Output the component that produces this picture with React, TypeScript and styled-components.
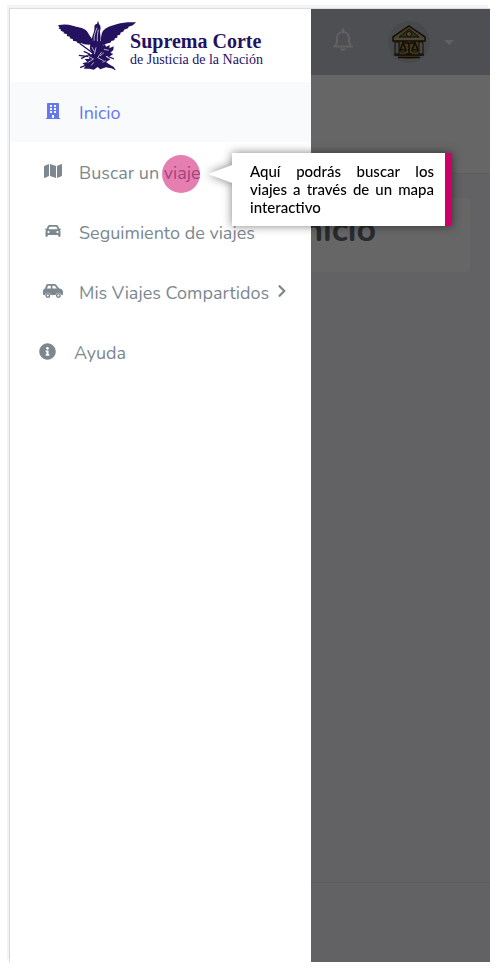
import React from "react";
import styled, { createGlobalStyle } from "styled-components";
import { FaBuilding, FaMap, FaCar, FaInfoCircle, FaChevronRight } from "react-icons/fa";

const GlobalStyle = createGlobalStyle`
  * { box-sizing: border-box; }
  body { margin: 0; background: #fff; font-family: "Nunito", "Lato", sans-serif; }
`;

const Page = styled.div`
  min-height: 100vh;
  padding: 8px 7px 8px 9px;
  display: flex;
`;

const Frame = styled.div`
  position: relative;
  flex: 1;
  min-width: 0;
  display: flex;
  flex-direction: column;
  background: #f5f6f9;
  border-top: 1px solid #dcdde0;
  border-left: 1px solid #d8d8da;
  box-shadow: -2px -3px 0 #f2f3f3;
`;

const TopBar = styled.header`
  height: 66px;
  display: flex;
  align-items: center;
  justify-content: flex-end;
  padding-right: 36px;
  background: #c3c5cf;
`;

const IconButton = styled.button`
  border: 0;
  padding: 0;
  background: none;
  display: flex;
  align-items: center;
  gap: 14px;
  color: #f2f2f5;
`;

const BellButton = styled(IconButton)`
  margin: 0 34px 4px 0;
`;

const Avatar = styled.span`
  width: 42px;
  height: 42px;
  border-radius: 50%;
  background: #b5b6bc;
  display: grid;
  place-items: center;
`;

const Hero = styled.div`
  height: 99px;
  background: #fff;
  border-bottom: 1px solid #ebecef;
`;

const Content = styled.main`
  flex: 1;
  padding: 24px 20px;
`;

const Card = styled.section`
  min-height: 74px;
  padding: 10px 94px 20px 20px;
  border-radius: 4px;
  background: #fff;
`;

const Title = styled.h1`
  margin: 0;
  color: #5f6b76;
  font-size: 34px;
  line-height: 44px;
  font-weight: 700;
  text-align: right;
`;

const Footer = styled.footer`
  height: 80px;
  border-top: 1px solid #e8e9ed;
`;

const Scrim = styled.div`
  position: absolute;
  inset: 0;
  background: rgba(0, 0, 0, 0.6);
`;

const Drawer = styled.aside`
  position: absolute;
  top: 0;
  bottom: 0;
  left: 0;
  width: 301px;
  background: #fff;
`;

const Brand = styled.a`
  height: 73px;
  padding: 0 48px;
  display: flex;
  align-items: center;
  color: #24125f;
  text-decoration: none;
  font-family: "Liberation Serif", serif;
`;

const BrandText = styled.span`
  display: flex;
  flex-direction: column;
  margin: 8px 0 0 -8px;
  white-space: nowrap;
`;

const BrandName = styled.strong`
  font-size: 20px;
  line-height: 20px;
`;

const BrandSub = styled.span`
  font-size: 14px;
  line-height: 18px;
`;

const Menu = styled.ul`
  list-style: none;
  margin: 0;
  padding: 0;
`;

const MenuItem = styled.li`
  position: relative;
`;

const MenuLink = styled.a<{ $active?: boolean; $outdent?: boolean }>`
  height: 60px;
  padding-left: ${(p) => (p.$outdent ? 27 : 32)}px;
  display: flex;
  align-items: center;
  gap: 16px;
  color: ${(p) => (p.$active ? "#6777ef" : "#7c8790")};
  background: ${(p) => (p.$active ? "#f8fafc" : "transparent")};
  font-size: 18px;
  line-height: 24px;
  text-decoration: none;
  white-space: nowrap;
`;

const MenuIcon = styled.span`
  width: 21px;
  display: flex;
  justify-content: center;
  padding-bottom: 2px;
`;

const MenuLabel = styled.span`
  padding-top: 2px;
`;

const Chevron = styled(FaChevronRight)`
  margin: 0 0 2px -10px;
`;

const Highlight = styled.span`
  position: absolute;
  left: 152px;
  top: 13px;
  width: 38px;
  height: 38px;
  border-radius: 50%;
  background: rgba(204, 0, 102, 0.5);
  pointer-events: none;
`;

const Hint = styled.div`
  position: absolute;
  z-index: 1;
  left: 222px;
  top: 11px;
  width: 220px;
  padding: 9px 11px 10px 18px;
  border-right: 7px solid #cc0066;
  background: #fff;
  color: #000;
  filter: drop-shadow(0 0 5px rgba(0, 0, 0, 0.5));
  font-family: "Lato", sans-serif;
  font-size: 15px;
  line-height: 18px;
  font-weight: 500;
  text-align: justify;

  &::before {
    content: "";
    position: absolute;
    right: 100%;
    top: 12px;
    border: solid transparent;
    border-width: 9px 24px 9px 0;
    border-right-color: #fff;
  }
`;

const Eagle = () => (
  <svg width="82" height="52" viewBox="174 64 246 156" preserveAspectRatio="none" fill="#24125f" aria-hidden="true">
    <path d="M174 80c14-3 31-3 45 1 15 5 27 4 39 12 9 6 11 18 19 25l7 17-15 3-15-1-9-4-10 1-5-6-9-1-2-6-9-2 1-5-10-2 1-5-11-3 1-4-10-4 2-3-9-4 4-2z" />
    <path d="M414 71c-22-1-41 0-60 6-18 5-32 9-42 20-5 7-5 19-7 29l-7 11 15 2 14-5 8-2 3-5 9-2 2-6 7-2 1-7 8-2 1-6 10-4 1-5 12-4 2-5 13-4z" />
    <path d="M297 66l3 10c7 7 5 14 3 22l2 20-4 24h-17l-6-20c1-13 9-23 8-34-1-8 2-12 8-13z" />
    <path d="M294 87c-5 14-10 22-9 39M298 93c-2 10-4 22-3 35" stroke="#fff" strokeWidth="2" fill="none" />
    <path d="M273 136l32-3 12 10-2 15 14 7-8 9 14 8-14 9 12 7 14 8-2 4-24-4-17 6-8-7-12 8-14-3-17 0 6-9-10-7 15-4-8-9 15-1-5-12 14-2-8-14z" />
    <path d="M310 148l7-12 5 8 11-5-1 10 13-6-1 11-9 8 9 4-14 9-9-4-14 11-3-13 8-12z" />
    <path d="M240 134l110 79M329 174l17 7M245 180l28-14M238 170l30 4M242 207l31-13M253 158l18 8" stroke="#24125f" strokeWidth="4" fill="none" />
    <path d="M278 145l8 14M291 146l-5 20M308 160l-12 17 18 9M265 171l18 10-18 11M315 152l15 3M276 200l8-9M303 172l12-10M321 186l-10 5" stroke="#fff" strokeWidth="2" fill="none" />
  </svg>
);

const Bell = () => (
  <svg width="22" height="24" viewBox="0 0 22 24" fill="none" aria-hidden="true">
    <path d="M2 18.500h18M4 18v-2l1-1.500V10c0-3.500 2.500-6 6-6s6 2.500 6 6v4.500l1 1.500v2" stroke="currentColor" strokeWidth="2" strokeLinecap="round" strokeLinejoin="round" />
    <path d="M11 1.500V4" stroke="currentColor" strokeWidth="2.500" strokeLinecap="round" />
    <path d="M8 20.500h6c-.4 1.500-1.500 2.500-3 2.500s-2.600-1-3-2.500z" fill="currentColor" />
  </svg>
);

const Courthouse = () => (
  <svg width="34" height="34" viewBox="0 0 34 34" aria-hidden="true">
    <path d="M4 15h26v14c-4 4-8 5-13 5s-10-1-13-5z" fill="#a88943" />
    <path d="M17 1L33 12v4H1v-4z" fill="#b8a468" stroke="#26211d" strokeWidth="1.500" />
    <path d="M17 4l10 8H7z" fill="#8d7640" stroke="#26211d" />
    <circle cx="17" cy="9" r="2.500" fill="#c9b878" stroke="#26211d" />
    <path d="M2 14h30" stroke="#c8bfa8" strokeWidth="1" />
    <path d="M3 17h4v12H3zM27 17h4v12h-4z" fill="#b5b2ac" stroke="#26211d" />
    <path d="M2 30h30M6 32.500h22" stroke="#26211d" strokeWidth="1.500" />
    <path d="M17 16v13M10 18h14M11 18l-3 7h6zM23 18l-3 7h6zM14 29h6" fill="none" stroke="#26211d" strokeWidth="1.500" />
    <path d="M8 25h6l-1 2H9zM20 25h6l-1 2h-4z" fill="#c9a53e" stroke="#26211d" />
    <circle cx="17" cy="16.500" r="1.500" fill="#a52e2e" />
  </svg>
);

const Caret = () => (
  <svg width="10" height="5" viewBox="0 0 10 5" fill="currentColor" aria-hidden="true">
    <path d="M0 0h10L5 5z" />
  </svg>
);

const CompactCar = () => (
  <svg width="16" height="13" viewBox="0 0 16 13" fill="currentColor" aria-hidden="true">
    <path fillRule="evenodd" d="M5 0h6c1.200 0 2.100.6 2.500 1.700l.8 2.100.4-.2c.6-.2 1.100 0 1.200.5.1.4-.1.800-.6 1l-.4.200c.4.500.6 1 .6 1.700v3.800c0 .7-.4 1.200-1.100 1.200s-1.200-.5-1.200-1.200V10H2.800v.8c0 .7-.5 1.200-1.200 1.200S.5 11.500.5 10.800V7c0-.7.2-1.200.6-1.700l-.4-.2c-.5-.2-.7-.6-.6-1 .1-.5.6-.7 1.200-.5l.4.200.8-2.100C2.900.6 3.800 0 5 0zm.2 1.800c-.5 0-.8.200-1 .6l-.7 1.900h9l-.7-1.900c-.2-.4-.5-.6-1-.6zM3.500 6a1.100 1.100 0 1 0 0 2.200 1.100 1.100 0 0 0 0-2.200zm9 0a1.100 1.100 0 1 0 0 2.200 1.100 1.100 0 0 0 0-2.200z" />
  </svg>
);

const FamilyCar = () => (
  <svg width="20" height="14" viewBox="0 0 20 14" fill="currentColor" aria-hidden="true">
    <path fillRule="evenodd" d="M5 0h6.500c.8 0 1.400.3 1.900.9L16.200 4.600c2.300.2 3.800 1.600 3.800 3.500V10c0 .6-.4 1-1 1h-.7a3 3 0 0 0-5.800 0h-4.800a3 3 0 0 0-5.800 0H1c-.6 0-1-.4-1-1V7c0-1.200.7-2 1.800-2.300L3.200 1.200C3.500.4 4.100 0 5 0zm.1 1.700L4 4.600h3.800V1.700zm4.300 0v2.900h4.500l-2-2.500c-.2-.3-.5-.4-.9-.4z" />
    <path fillRule="evenodd" d="M4.800 9a2.500 2.500 0 1 1 0 5 2.500 2.500 0 0 1 0-5zm0 1.500a1 1 0 1 0 0 2 1 1 0 0 0 0-2zM15.400 9a2.500 2.500 0 1 1 0 5 2.500 2.500 0 0 1 0-5zm0 1.500a1 1 0 1 0 0 2 1 1 0 0 0 0-2z" />
  </svg>
);

export default function App() {
  return (
    <>
      <GlobalStyle />
      <Page>
        <Frame>
          <TopBar>
            <BellButton type="button" aria-label="Notificaciones">
              <Bell />
            </BellButton>
            <IconButton type="button" aria-label="Cuenta">
              <Avatar>
                <Courthouse />
              </Avatar>
              <Caret />
            </IconButton>
          </TopBar>
          <Hero />
          <Content>
            <Card>
              <Title>Inicio</Title>
            </Card>
          </Content>
          <Footer />
          <Scrim />
          <Drawer>
            <Brand href="#">
              <Eagle />
              <BrandText>
                <BrandName>Suprema Corte</BrandName>
                <BrandSub>de Justicia de la Nación</BrandSub>
              </BrandText>
            </Brand>
            <nav>
              <Menu>
                <MenuItem>
                  <MenuLink href="#" $active aria-current="page">
                    <MenuIcon><FaBuilding size={16} /></MenuIcon>
                    <MenuLabel>Inicio</MenuLabel>
                  </MenuLink>
                </MenuItem>
                <MenuItem>
                  <MenuLink href="#">
                    <MenuIcon><FaMap size={18} /></MenuIcon>
                    <MenuLabel>Buscar un viaje</MenuLabel>
                  </MenuLink>
                  <Highlight />
                  <Hint role="tooltip">Aquí podrás buscar los viajes a través de un mapa interactivo</Hint>
                </MenuItem>
                <MenuItem>
                  <MenuLink href="#">
                    <MenuIcon><CompactCar /></MenuIcon>
                    <MenuLabel>Seguimiento de viajes</MenuLabel>
                  </MenuLink>
                </MenuItem>
                <MenuItem>
                  <MenuLink href="#">
                    <MenuIcon><FamilyCar /></MenuIcon>
                    <MenuLabel>Mis Viajes Compartidos</MenuLabel>
                    <Chevron size={14} />
                  </MenuLink>
                </MenuItem>
                <MenuItem>
                  <MenuLink href="#" $outdent>
                    <MenuIcon><FaInfoCircle size={17} /></MenuIcon>
                    <MenuLabel>Ayuda</MenuLabel>
                  </MenuLink>
                </MenuItem>
              </Menu>
            </nav>
          </Drawer>
        </Frame>
      </Page>
    </>
  );
}
